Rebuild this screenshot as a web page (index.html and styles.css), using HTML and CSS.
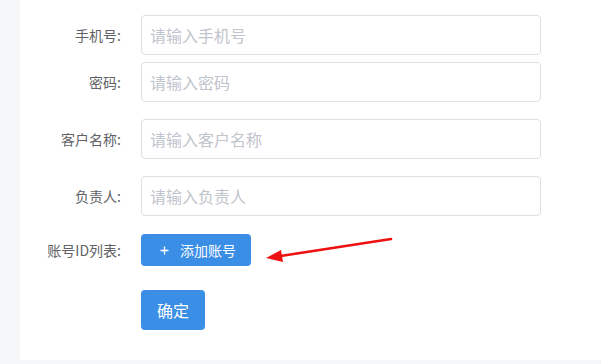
FILE: index.html
```html
<!DOCTYPE html>
<html lang="zh">
<head>
<meta charset="utf-8">
<link rel="stylesheet" href="styles.css">
</head>
<body>
<div class="page">
  <div class="side"></div>
  <div class="panel">
    <div class="item first">
      <label class="label">手机号:</label>
      <input class="input" placeholder="请输入手机号">
    </div>
    <div class="item tight">
      <label class="label">密码:</label>
      <input class="input" placeholder="请输入密码">
    </div>
    <div class="item">
      <label class="label">客户名称:</label>
      <input class="input" placeholder="请输入客户名称">
    </div>
    <div class="item">
      <label class="label">负责人:</label>
      <input class="input" placeholder="请输入负责人">
    </div>
    <div class="item add-row">
      <label class="label">账号ID列表:</label>
      <button class="btn btn-add"><svg class="plus" width="9" height="9" viewBox="0 0 9 9"><path d="M4.5 0.5V8.5M0.5 4.5H8.5" stroke="#fff" stroke-width="1.4"/></svg><span>添加账号</span></button>
    </div>
    <div class="item submit-row">
      <span class="label"></span>
      <button class="btn btn-ok">确定</button>
    </div>
    <svg class="arrow" width="140" height="40" viewBox="0 0 140 40">
      <line x1="131" y1="8" x2="14" y2="26" stroke="#ee1111" stroke-width="2.6" stroke-linecap="round"/>
      <polygon points="6,27 21,19 23,31" fill="#ee1111"/>
    </svg>
  </div>
</div>
</body>
</html>
```
FILE: styles.css
```css
html, body {
  margin: 0;
  padding: 0;
}
body {
  background: #f5f6f8;
  font-family: "Noto Sans CJK SC", "Noto Sans", sans-serif;
  width: 601px;
  height: 364px;
  overflow: hidden;
}
.page {
  display: flex;
  height: 364px;
}
.side {
  width: 20px;
  flex: none;
}
.panel {
  position: relative;
  flex: 1;
  background: #fff;
  height: 360px;
  display: flex;
  flex-direction: column;
}
.item {
  display: flex;
  align-items: center;
  margin-top: 17px;
}
.item.first { margin-top: 15px; }
.item.tight { margin-top: 7px; }
.item.add-row { margin-top: 18px; }
.item.submit-row { margin-top: 24px; }
.label {
  width: 101px;
  margin-right: 20px;
  text-align: right;
  font-size: 14px;
  color: #606266;
  flex: none;
}
.input {
  box-sizing: border-box;
  width: 400px;
  height: 40px;
  border: 1px solid #dcdfe6;
  border-radius: 4px;
  padding: 0 8px;
  font-size: 16px;
  font-family: "Noto Sans CJK SC", "Noto Sans", sans-serif;
  color: #606266;
  outline: none;
  background: #fff;
}
.input::placeholder {
  color: #c0c4cc;
}
.btn {
  box-sizing: border-box;
  border: none;
  border-radius: 4px;
  background: #3a8ee6;
  color: #fff;
  font-family: "Noto Sans CJK SC", "Noto Sans", sans-serif;
  padding: 0;
  display: flex;
  align-items: center;
  justify-content: center;
}
.btn-add {
  width: 110px;
  height: 32px;
  font-size: 14px;
  justify-content: flex-start;
  padding-left: 19px;
}
.plus {
  margin-right: 11px;
}
.btn-ok {
  width: 64px;
  height: 40px;
  font-size: 16px;
}
.arrow {
  position: absolute;
  left: 240px;
  top: 231px;
}
```
